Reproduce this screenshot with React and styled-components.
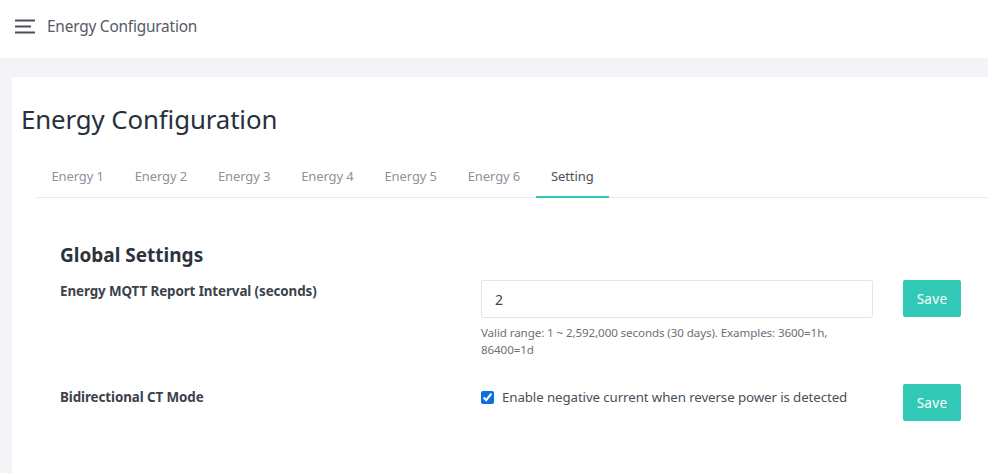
import React from "react";
import styled, { createGlobalStyle } from "styled-components";

const Global = createGlobalStyle`
  html, body { margin: 0; padding: 0; }
  body {
    background: #f3f4f8;
    font-family: "Noto Sans", "Open Sans", sans-serif;
    color: #333;
    width: 988px;
    height: 473px;
    overflow: hidden;
  }
`;

const Header = styled.header`
  height: 58px;
  background: #fff;
  display: flex;
  align-items: center;
  padding: 0 0 6px 15px;
  gap: 11px;
  box-sizing: border-box;
`;

const HeaderTitle = styled.span`
  font-size: 15.4px;
  color: #555a63;
  letter-spacing: -0.2px;
`;

const Main = styled.main`
  padding: 19px 0 0 12px;
`;

const Card = styled.section`
  background: #fff;
  padding: 24px 0 0 9px;
  height: 396px;
  box-sizing: border-box;
`;

const Title = styled.h1`
  margin: 0;
  font-size: 25.8px;
  font-weight: 400;
  line-height: 36px;
  color: #27313d;
  letter-spacing: -0.1px;
`;

const TabBar = styled.nav`
  display: flex;
  margin: 21px 0 0 15px;
  border-bottom: 1px solid #e8e8e8;
`;

const Tab = styled.div`
  padding: 0 15.4px 2px;
  height: 40px;
  display: flex;
  align-items: center;
  font-size: 13px;
  color: ${p => (p.$active ? "#4a4f57" : "#8c929b")};
  border-bottom: 2px solid ${p => (p.$active ? "#2ec9b7" : "transparent")};
  margin-bottom: -1px;
  box-sizing: border-box;
  letter-spacing: -0.1px;
`;

const Content = styled.div`
  padding: 44px 0 0 39px;
`;

const SectionTitle = styled.h2`
  margin: 0 0 12px 0;
  font-size: 19px;
  font-weight: 700;
  color: #2c333d;
  line-height: 26px;
`;

const Row = styled.div`
  display: grid;
  grid-template-columns: 391px 392px 58px;
  column-gap: 30px;
  align-items: start;
  margin-bottom: ${p => p.$mb || 0}px;
`;

const Label = styled.div`
  font-size: 13.4px;
  font-weight: 700;
  color: #3c424b;
  padding-top: ${p => p.$pt || 0}px;
  letter-spacing: -0.1px;
`;

const Field = styled.div`
  display: flex;
  flex-direction: column;
`;

const Input = styled.input`
  height: 38px;
  box-sizing: border-box;
  border: 1px solid #e3e5e8;
  border-radius: 2px;
  padding: 0 13px;
  font-family: inherit;
  font-size: 14px;
  color: #444;
  outline: none;
`;

const Help = styled.div`
  margin-top: 6px;
  font-size: 11.6px;
  line-height: 17px;
  color: #6b7079;
  padding-right: 30px;
  letter-spacing: -0.1px;
`;

const SaveButton = styled.button`
  width: 58px;
  height: 37px;
  background: #33c9b7;
  border: none;
  border-radius: 2px;
  color: #fff;
  font-family: inherit;
  font-size: 13.5px;
  letter-spacing: 0.3px;
  cursor: pointer;
  padding: 0;
`;

const CheckLabel = styled.label`
  display: flex;
  align-items: center;
  gap: 8px;
  font-size: 13.3px;
  color: #4a4f57;
  padding-top: 4px;
  letter-spacing: -0.1px;
`;

const Check = styled.input`
  width: 13px;
  height: 13px;
  margin: 0;
  accent-color: #0b6fe0;
`;

const Hamburger = () => (
  <svg width="21" height="15" viewBox="0 0 21 15">
    <rect x="0" y="0.5" width="20" height="2" fill="#4b4f55" />
    <rect x="0" y="6.5" width="16" height="2" fill="#4b4f55" />
    <rect x="0" y="12.5" width="20" height="2" fill="#4b4f55" />
  </svg>
);

const tabs = ["Energy 1", "Energy 2", "Energy 3", "Energy 4", "Energy 5", "Energy 6", "Setting"];

export default function App() {
  return (
    <>
      <Global />
      <Header>
        <Hamburger />
        <HeaderTitle>Energy Configuration</HeaderTitle>
      </Header>
      <Main>
        <Card>
          <Title>Energy Configuration</Title>
          <TabBar>
            {tabs.map(t => (
              <Tab key={t} $active={t === "Setting"}>{t}</Tab>
            ))}
          </TabBar>
          <Content>
            <SectionTitle>Global Settings</SectionTitle>
            <Row $mb={26}>
              <Label $pt={2}>Energy MQTT Report Interval (seconds)</Label>
              <Field>
                <Input defaultValue="2" />
                <Help>Valid range: 1 ~ 2,592,000 seconds (30 days). Examples: 3600=1h, 86400=1d</Help>
              </Field>
              <SaveButton>Save</SaveButton>
            </Row>
            <Row>
              <Label $pt={4}>Bidirectional CT Mode</Label>
              <CheckLabel>
                <Check type="checkbox" defaultChecked />
                Enable negative current when reverse power is detected
              </CheckLabel>
              <SaveButton>Save</SaveButton>
            </Row>
          </Content>
        </Card>
      </Main>
    </>
  );
}
